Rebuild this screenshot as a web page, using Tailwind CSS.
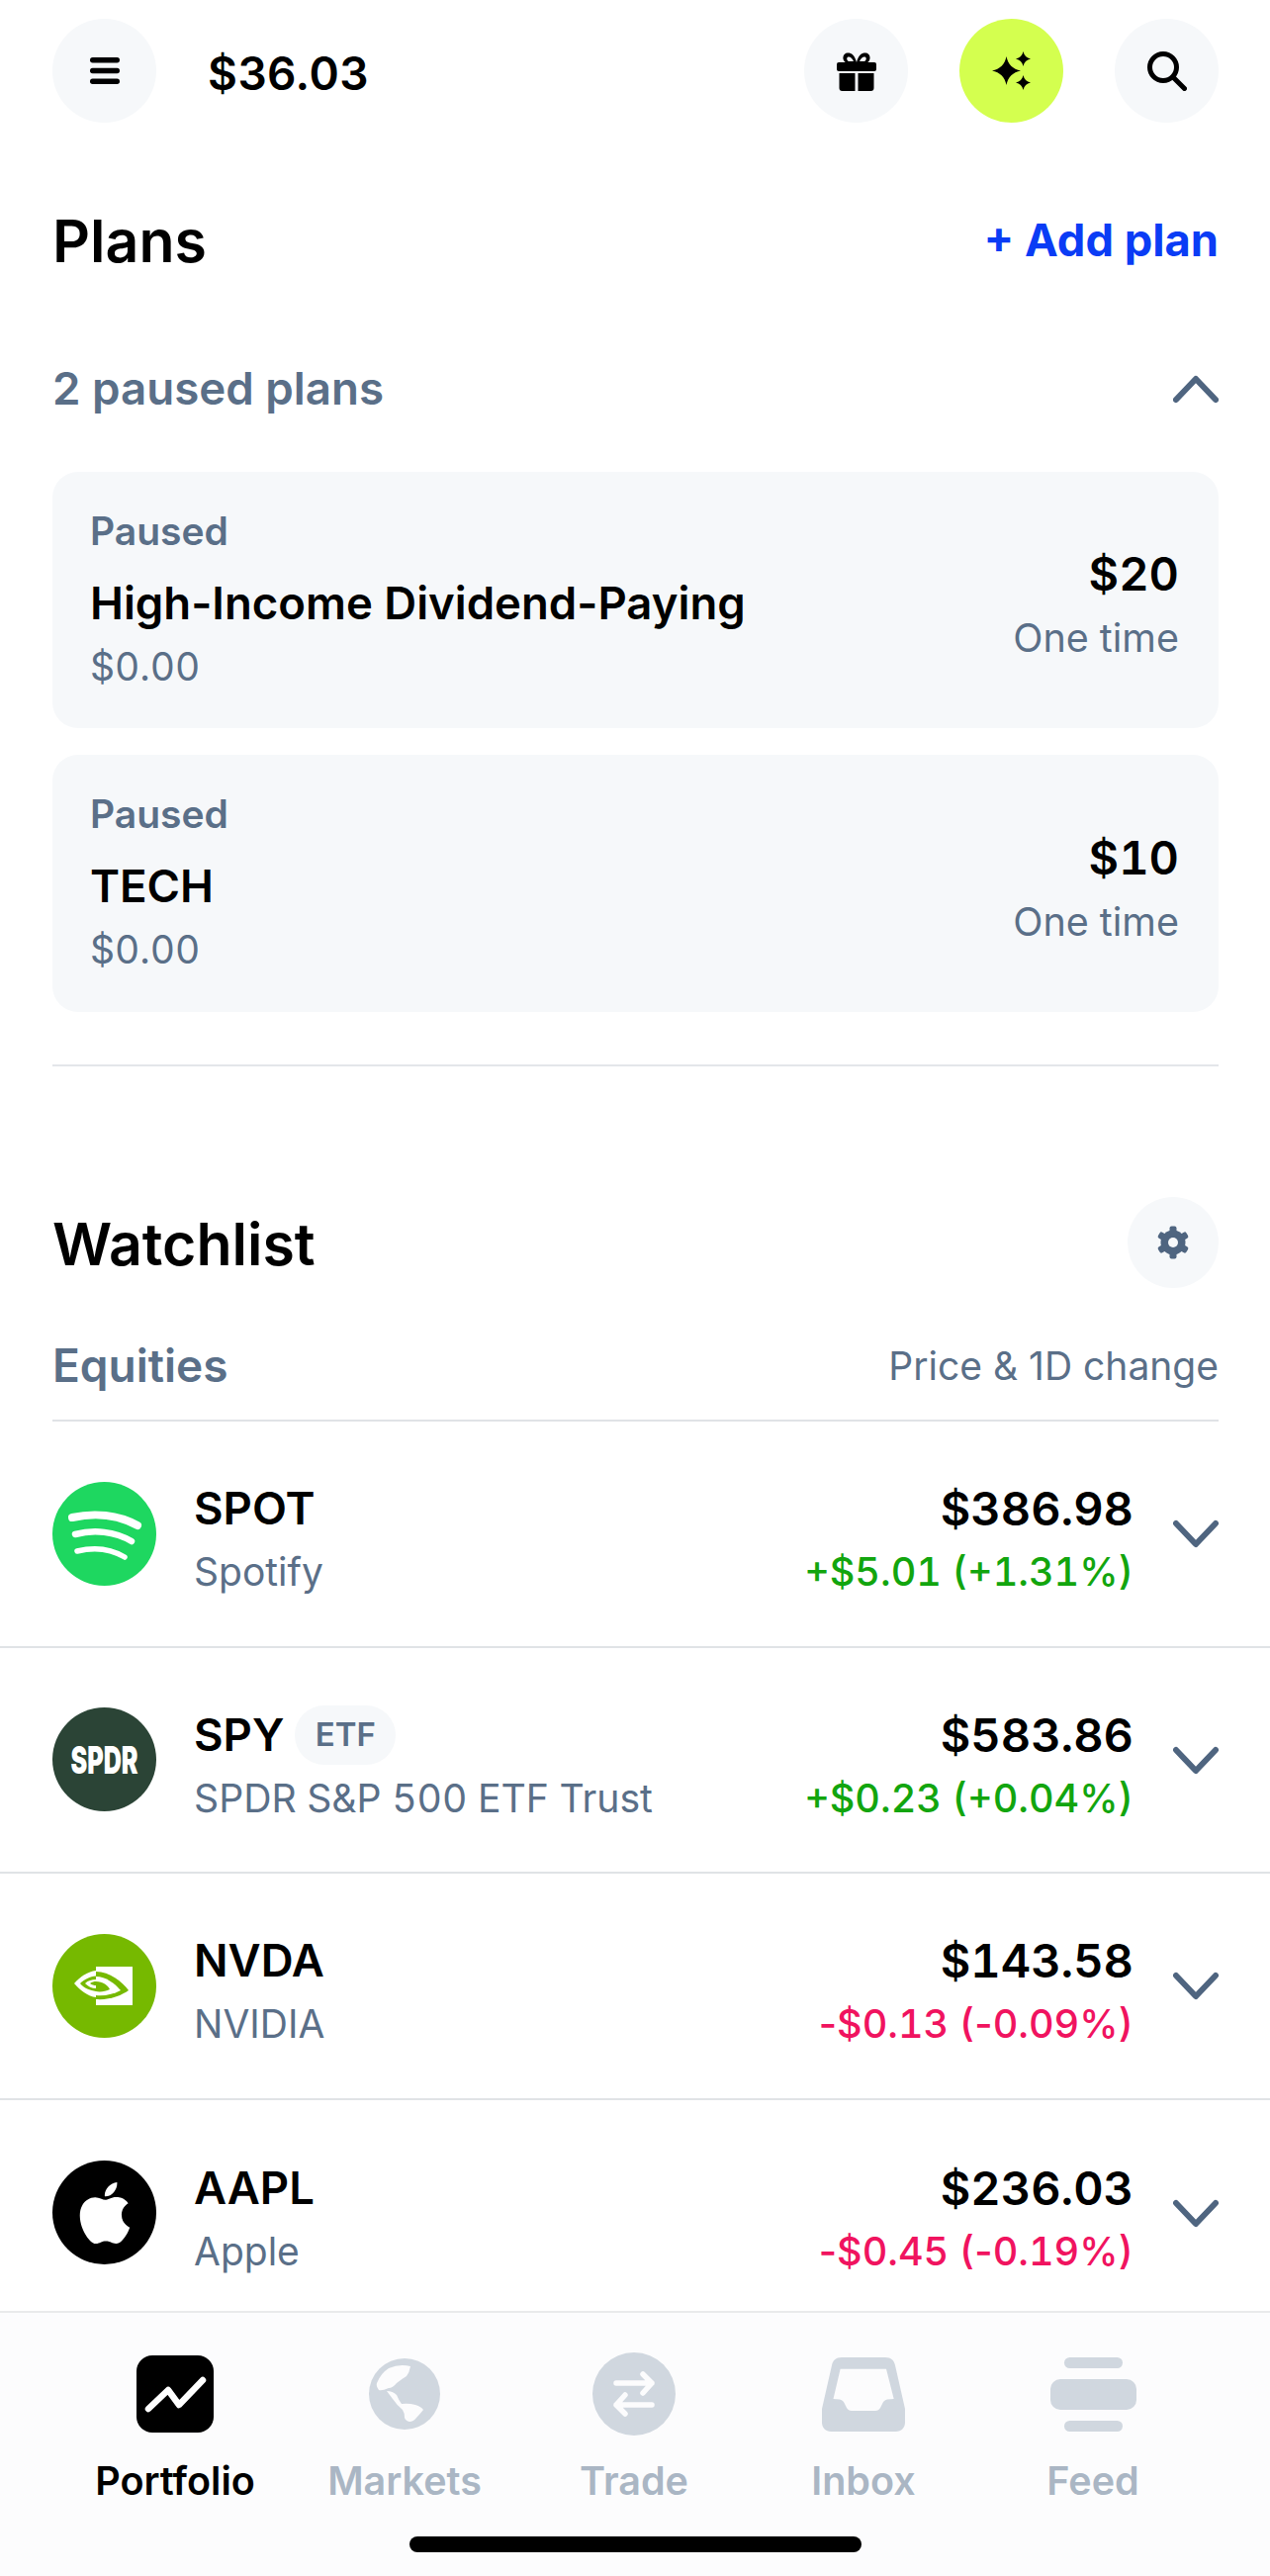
<!DOCTYPE html>
<html><head><meta charset="utf-8"><script src="https://cdn.jsdelivr.net/npm/@tailwindcss/browser@4"></script></head>
<body class="bg-white">
<div class="w-[1284px] h-[2604px] flex flex-col overflow-hidden bg-white text-black font-['Inter',sans-serif]">
  <main class="flex-1 pl-[53px] pr-[52px] min-h-0 overflow-hidden">
    <header class="pt-[19px] flex items-center h-[124px]">
      <button class="w-[105px] h-[105px] rounded-full bg-[#f6f8fa] flex items-center justify-center">
        <svg width="30" height="27" viewBox="0 0 30 27"><rect x="0" y="0" width="30" height="5.500" rx="2.700" fill="#000"/><rect x="0" y="10.750" width="30" height="5.500" rx="2.700" fill="#000"/><rect x="0" y="21.500" width="30" height="5.500" rx="2.700" fill="#000"/></svg>
      </button>
      <div class="ml-[52px] pt-[4px] text-[46px] font-semibold tracking-[0.01em] leading-none">$36.03</div>
      <div class="ml-auto flex gap-[52px]">
        <button class="w-[105px] h-[105px] rounded-full bg-[#f6f8fa] flex items-center justify-center">
          <svg width="40" height="40" viewBox="0 0 40 40"><path d="M20 11C18 3 14 1 10.500 1.500C7 2 5.500 6 7 9C8 11 9.500 11.500 11 12H29C30.500 11.500 32 11 33 9C34.500 6 33 2 29.500 1.500C26 1 22 3 20 11Z" fill="#000"/><path d="M17 10C15.500 6.500 13.500 5 11.500 5.500C10 6 9.500 8.500 12 10Z M23 10C24.500 6.500 26.500 5 28.500 5.500C30 6 30.500 8.500 28 10Z" fill="#f6f8fa"/><rect x="0" y="11" width="40" height="9" rx="2" fill="#000"/><path d="M2.500 22H18.500V40H5.500C3.500 40 2.500 39 2.500 37Z M21.500 22H37.500V37C37.500 39 36.500 40 34.500 40H21.500Z" fill="#000"/></svg>
        </button>
        <button class="w-[105px] h-[105px] rounded-full bg-[#d4ff4f] flex items-center justify-center">
          <svg width="40" height="40" viewBox="0 0 40 40"><path d="M14.500 5C16 13 21 18 29 19.500C21 21 16 26 14.500 34C13 26 8 21 0 19.500C8 18 13 13 14.500 5Z M31.500 0C32.300 4 35 6.700 39 7.500C35 8.300 32.300 11 31.500 15C30.700 11 28 8.300 24 7.500C28 6.700 30.700 4 31.500 0Z M31.500 24C32.300 28 35 30.700 39 31.500C35 32.300 32.300 35 31.500 39C30.700 35 28 32.300 24 31.500C28 30.700 30.700 28 31.500 24Z" fill="#000"/></svg>
        </button>
        <button class="w-[105px] h-[105px] rounded-full bg-[#f6f8fa] flex items-center justify-center">
          <svg width="40" height="40" viewBox="0 0 40 40"><circle cx="16" cy="16" r="13.500" fill="none" stroke="#000" stroke-width="5"/><path d="M26 26L37.500 37.500" stroke="#000" stroke-width="5" stroke-linecap="round"/></svg>
        </button>
      </div>
    </header>

    <section class="mt-[79px] flex items-center justify-between h-[80px]">
      <h1 class="text-[59px] font-semibold leading-none">Plans</h1>
      <a class="text-[45.300px] font-bold text-[#0a3cf5] leading-none">+ Add plan</a>
    </section>

    <div class="mt-[80px] flex items-center justify-between h-[60px]">
      <div class="text-[45.700px] font-semibold text-[#5a6f88] leading-none">2 paused plans</div>
      <svg width="46" height="30" viewBox="0 0 46 30"><path d="M3 26L23 5L43 26" fill="none" stroke="#4f6580" stroke-width="6" stroke-linecap="round" stroke-linejoin="round"/></svg>
    </div>

    <div class="mt-[54px] flex flex-col gap-[27px]">
      <div class="h-[259px] rounded-[26px] bg-[#f6f8fa] pl-[38px] pr-[40px] flex items-center justify-between">
        <div class="flex flex-col">
          <div class="-mt-[2px] text-[39px] font-semibold text-[#5a6f88] leading-[44px]">Paused</div>
          <div class="mt-[24px] text-[45.500px] font-semibold leading-[54px]">High-Income Dividend-Paying</div>
          <div class="mt-[14px] text-[39px] tabular-nums text-[#5a6f88] leading-[46px]">$0.00</div>
        </div>
        <div class="flex flex-col items-end pt-[8px]">
          <div class="text-[47px] font-semibold leading-[54px] tabular-nums">$20</div>
          <div class="mt-[15px] text-[39.500px] text-[#5a6f88] leading-[46px]">One time</div>
        </div>
      </div>
      <div class="h-[260px] rounded-[26px] bg-[#f6f8fa] pl-[38px] pr-[40px] flex items-center justify-between">
        <div class="flex flex-col">
          <div class="-mt-[2px] text-[39px] font-semibold text-[#5a6f88] leading-[44px]">Paused</div>
          <div class="mt-[24px] text-[45.500px] font-semibold leading-[54px]">TECH</div>
          <div class="mt-[14px] text-[39px] tabular-nums text-[#5a6f88] leading-[46px]">$0.00</div>
        </div>
        <div class="flex flex-col items-end pt-[8px]">
          <div class="text-[47px] font-semibold leading-[54px] tabular-nums">$10</div>
          <div class="mt-[15px] text-[39.500px] text-[#5a6f88] leading-[46px]">One time</div>
        </div>
      </div>
    </div>

    <div class="mt-[53px] h-[2px] bg-[#e3e6ea]"></div>

    <div class="mt-[132px] flex items-center justify-between h-[92px]">
      <h2 class="pt-[3px] text-[59px] font-semibold leading-none">Watchlist</h2>
      <button class="w-[92px] h-[92px] rounded-full bg-[#f6f8fa] flex items-center justify-center">
        <svg width="34" height="34" viewBox="0 0 34 34"><g fill="#4f6580"><circle cx="17" cy="17" r="12.500"/><rect x="13.500" y="0.500" width="7" height="33" rx="2"/><rect x="13.500" y="0.500" width="7" height="33" rx="2" transform="rotate(60 17 17)"/><rect x="13.500" y="0.500" width="7" height="33" rx="2" transform="rotate(120 17 17)"/></g><circle cx="17" cy="17" r="5" fill="#f6f8fa"/></svg>
      </button>
    </div>

    <div class="mt-[50px] flex items-center justify-between h-[56px]">
      <div class="text-[46px] font-semibold text-[#5a6f88] leading-none">Equities</div>
      <div class="text-[39px] text-[#5a6f88] leading-none">Price &amp; 1D change</div>
    </div>
    <div class="mt-[27px] h-[2px] bg-[#e0e3e6]"></div>

    <ul class="-ml-[53px] -mr-[52px]">
      <li class="h-[228.500px] pl-[53px] pr-[52px] border-b-2 border-[#e0e3e6] flex items-center">
        <svg class="shrink-0" width="105" height="105" viewBox="0 0 105 105"><circle cx="52.500" cy="52.500" r="52.500" fill="#1ed760"/><g fill="none" stroke="#fff" stroke-linecap="round"><path d="M20 36C42 31 66 33 86 44" stroke-width="8"/><path d="M23 53C42 48 63 50 80 60" stroke-width="6.500"/><path d="M25 70C41 66 58 67 73 76" stroke-width="5.500"/></g></svg>
        <div class="ml-[38px] pt-[10px] flex flex-col">
          <div class="h-[54px] flex items-center text-[45.500px] font-semibold leading-[54px]">SPOT</div>
          <div class="mt-[14px] text-[39px] text-[#5a6f88] leading-[46px]">Spotify</div>
        </div>
        <div class="ml-auto pt-[10px] flex flex-col items-end tabular-nums">
          <div class="text-[47px] font-semibold leading-[54px]">$386.98</div>
          <div class="mt-[14px] text-[39.600px] font-medium text-[#12a50e] leading-[46px]">+$5.01 (+1.31%)</div>
        </div>
        <svg class="ml-[40px] shrink-0" width="46" height="30" viewBox="0 0 46 30"><path d="M3 5L23 26L43 5" fill="none" stroke="#4f6580" stroke-width="6" stroke-linecap="round" stroke-linejoin="round"/></svg>
      </li>
      <li class="h-[228.500px] pl-[53px] pr-[52px] border-b-2 border-[#e0e3e6] flex items-center">
        <div class="w-[105px] h-[105px] shrink-0 rounded-full bg-[#2b4436] flex items-center justify-center overflow-hidden"><span class="inline-block scale-x-[.66] text-[38px] font-black text-white leading-none">SPDR</span></div>
        <div class="ml-[38px] pt-[10px] flex flex-col">
          <div class="h-[54px] flex items-center gap-[11px] text-[45.500px] font-semibold leading-[54px]">SPY<span class="h-[60px] w-[102px] rounded-full bg-[#f6f8fa] text-[33px] font-semibold text-[#5a6f88] leading-none flex items-center justify-center">ETF</span></div>
          <div class="mt-[14px] text-[39.200px] tabular-nums text-[#5a6f88] leading-[46px]">SPDR S&amp;P 500 ETF Trust</div>
        </div>
        <div class="ml-auto pt-[10px] flex flex-col items-end tabular-nums">
          <div class="text-[47px] font-semibold leading-[54px]">$583.86</div>
          <div class="mt-[14px] text-[39.600px] font-medium text-[#12a50e] leading-[46px]">+$0.23 (+0.04%)</div>
        </div>
        <svg class="ml-[40px] shrink-0" width="46" height="30" viewBox="0 0 46 30"><path d="M3 5L23 26L43 5" fill="none" stroke="#4f6580" stroke-width="6" stroke-linecap="round" stroke-linejoin="round"/></svg>
      </li>
      <li class="h-[228.500px] pl-[53px] pr-[52px] border-b-2 border-[#e0e3e6] flex items-center">
        <svg class="shrink-0" width="105" height="105" viewBox="0 0 105 105"><circle cx="52.500" cy="52.500" r="52.500" fill="#76b900"/><rect x="44" y="33" width="37" height="39" fill="#fff"/><path d="M44 38C58 38 70 48 77 57C70 62 58 67 44 66Z" fill="#76b900"/><path d="M44 43C54 43 63 50 69 57C62 61 52 63 44 62Z" fill="#fff"/><path d="M44 48C51 48 56 52 58 56C54 58 48 59 44 58Z" fill="#76b900"/><path d="M22 50C28 43 36 38 44 37V64C36 63 28 57 22 50Z" fill="#fff"/><path d="M28 50C32 46 38 43 44 42.500V58C38 57 32 55 28 50Z" fill="#76b900"/><path d="M33 50C36 47 40 46 44 46V55C40 55 36 53 33 50Z" fill="#fff"/><path d="M38 50C40 48.500 42 48 44 48V52C42 52 40 51.500 38 50Z" fill="#76b900"/></svg>
        <div class="ml-[38px] pt-[10px] flex flex-col">
          <div class="h-[54px] flex items-center text-[45.500px] font-semibold leading-[54px]">NVDA</div>
          <div class="mt-[14px] text-[39px] text-[#5a6f88] leading-[46px]">NVIDIA</div>
        </div>
        <div class="ml-auto pt-[10px] flex flex-col items-end tabular-nums">
          <div class="text-[47px] font-semibold leading-[54px]">$143.58</div>
          <div class="mt-[14px] text-[39.600px] font-medium text-[#f0135f] leading-[46px]"><span class="normal-nums">-</span>$0.13 (<span class="normal-nums">-</span>0.09%)</div>
        </div>
        <svg class="ml-[40px] shrink-0" width="46" height="30" viewBox="0 0 46 30"><path d="M3 5L23 26L43 5" fill="none" stroke="#4f6580" stroke-width="6" stroke-linecap="round" stroke-linejoin="round"/></svg>
      </li>
      <li class="h-[228.500px] pl-[53px] pr-[52px] flex items-center">
        <div class="w-[105px] h-[105px] shrink-0 rounded-full bg-black flex items-center justify-center">
          <svg width="62" height="62" viewBox="0 0 24 24"><path fill="#fff" d="M12.152 6.896c-.948 0-2.415-1.078-3.96-1.04-2.04.027-3.91 1.183-4.961 3.014-2.117 3.675-.546 9.103 1.519 12.09 1.013 1.454 2.208 3.09 3.792 3.039 1.52-.065 2.09-.987 3.935-.987 1.831 0 2.35.987 3.96.948 1.637-.026 2.676-1.48 3.676-2.948 1.156-1.688 1.636-3.325 1.662-3.415-.039-.013-3.182-1.221-3.22-4.857-.026-3.04 2.48-4.494 2.597-4.559-1.429-2.09-3.623-2.324-4.39-2.376-2-.156-3.675 1.09-4.61 1.09zM15.53 3.83c.843-1.012 1.4-2.427 1.245-3.83-1.207.052-2.662.805-3.532 1.818-.78.896-1.454 2.338-1.273 3.714 1.338.104 2.715-.688 3.559-1.701"/></svg>
        </div>
        <div class="ml-[38px] pt-[10px] flex flex-col">
          <div class="h-[54px] flex items-center text-[45.500px] font-semibold leading-[54px]">AAPL</div>
          <div class="mt-[14px] text-[39px] text-[#5a6f88] leading-[46px]">Apple</div>
        </div>
        <div class="ml-auto pt-[10px] flex flex-col items-end tabular-nums">
          <div class="text-[47px] font-semibold leading-[54px]">$236.03</div>
          <div class="mt-[14px] text-[39.600px] font-medium text-[#f0135f] leading-[46px]"><span class="normal-nums">-</span>$0.45 (<span class="normal-nums">-</span>0.19%)</div>
        </div>
        <svg class="ml-[40px] shrink-0" width="46" height="30" viewBox="0 0 46 30"><path d="M3 5L23 26L43 5" fill="none" stroke="#4f6580" stroke-width="6" stroke-linecap="round" stroke-linejoin="round"/></svg>
      </li>
    </ul>
  </main>

  <nav class="h-[268px] shrink-0 border-t-2 border-[#e9eaeb] bg-[#fcfcfd] pt-[39px] flex flex-col">
    <div class="pl-[61px] grid grid-cols-[repeat(5,232px)]">
      <div class="flex flex-col items-center">
        <div class="h-[86px] flex items-center justify-center">
          <svg width="78" height="78" viewBox="0 0 78 78"><rect width="78" height="78" rx="16" fill="#000"/><path d="M12 54L32 35L43 50L67 25" fill="none" stroke="#fff" stroke-width="6.500" stroke-linecap="round" stroke-linejoin="round"/></svg>
        </div>
        <div class="mt-[22px] text-[39.500px] font-semibold leading-[46px] text-black">Portfolio</div>
      </div>
      <div class="flex flex-col items-center">
        <div class="h-[86px] flex items-center justify-center">
          <svg width="72" height="72" viewBox="0 0 72 72"><circle cx="36" cy="36" r="36" fill="#d0d7df"/><path d="M20 10Q31 5 42 8Q41 14 38 18Q33 21 28 25Q24 30 20 30Q13 33 10 32Q7 28 8 25Q12 15 20 10Z" fill="#fcfcfd"/><path d="M18 33Q24 33 28 37Q30 42 33 46Q40 45 47 47Q53 49 55 52Q51 57 48 60Q45 64 41 64Q37 63 36 60Q36 55 34 52Q28 47 24 41Q21 37 18 33Z" fill="#fcfcfd"/></svg>
        </div>
        <div class="mt-[22px] text-[39.500px] font-semibold leading-[46px] text-[#aab6c4]">Markets</div>
      </div>
      <div class="flex flex-col items-center">
        <div class="h-[86px] flex items-center justify-center">
          <svg width="84" height="84" viewBox="0 0 84 84"><circle cx="42" cy="42" r="42" fill="#d0d7df"/><g fill="none" stroke="#fcfcfd" stroke-width="5.500" stroke-linecap="round" stroke-linejoin="round"><path d="M24 31H60M51 22L60 31L51 41"/><path d="M60 53H24M33 43L24 53L33 62"/></g></svg>
        </div>
        <div class="mt-[22px] text-[39.500px] font-semibold leading-[46px] text-[#aab6c4]">Trade</div>
      </div>
      <div class="flex flex-col items-center">
        <div class="h-[86px] flex items-center justify-center">
          <svg width="84" height="75" viewBox="0 0 84 75"><path fill-rule="evenodd" d="M20 0H64C70 0 73 3 74 8L84 52V66C84 71 80 75 75 75H9C4 75 0 71 0 66V52L10 8C11 3 14 0 20 0ZM18.600 11.700H65L72.700 42L66 42.500C63 43 62 45 61 47L59 51C58 53 56 54 54 54H30C28 54 26 53 25 51L23 47C22 45 21 43 18 42.500L11.500 42Z" fill="#d0d7df"/></svg>
        </div>
        <div class="mt-[22px] text-[39.500px] font-semibold leading-[46px] text-[#aab6c4]">Inbox</div>
      </div>
      <div class="flex flex-col items-center">
        <div class="h-[86px] flex items-center justify-center">
          <svg width="87" height="75" viewBox="0 0 87 75"><rect x="14" y="0" width="59" height="11" rx="5.500" fill="#d0d7df"/><rect x="0" y="22" width="87" height="31" rx="10" fill="#d0d7df"/><rect x="14" y="64" width="59" height="11" rx="5.500" fill="#d0d7df"/></svg>
        </div>
        <div class="mt-[22px] text-[39.500px] font-semibold leading-[46px] text-[#aab6c4]">Feed</div>
      </div>
    </div>
    <div class="mt-[33px] self-center w-[457px] h-[16px] rounded-full bg-black"></div>
  </nav>
</div>
</body></html>
